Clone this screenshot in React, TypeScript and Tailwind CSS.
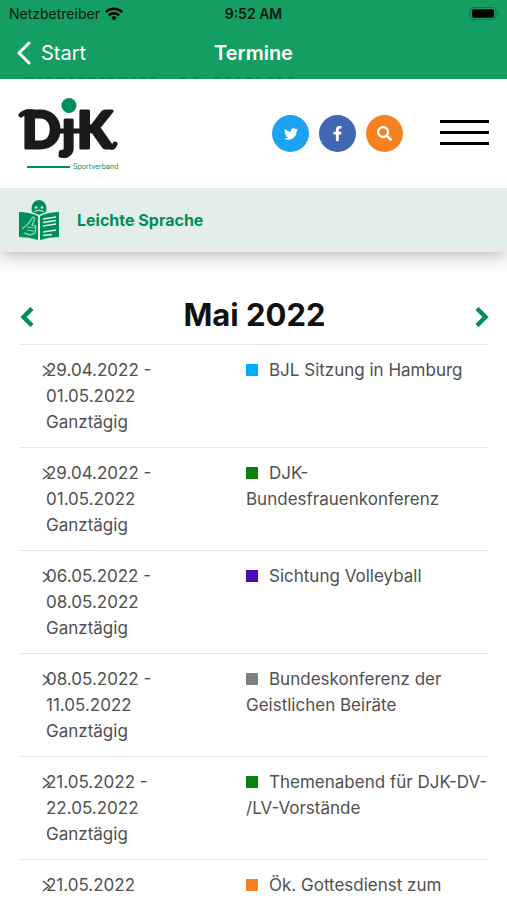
import { FaTwitter, FaFacebookF, FaSearch } from "react-icons/fa";

type Termin = {
  start: string;
  end?: string;
  title: string;
  color: string;
};

// \u200b erlaubt den Umbruch vor dem Schrägstrich
const termine: Termin[] = [
  { start: "29.04.2022 -", end: "01.05.2022", title: "BJL Sitzung in Hamburg", color: "bg-[#00aeff]" },
  { start: "29.04.2022 -", end: "01.05.2022", title: "DJK-Bundesfrauenkonferenz", color: "bg-[#0b800f]" },
  { start: "06.05.2022 -", end: "08.05.2022", title: "Sichtung Volleyball", color: "bg-[#4b0bb5]" },
  { start: "08.05.2022 -", end: "11.05.2022", title: "Bundeskonferenz der Geistlichen Beiräte", color: "bg-[#7b807b]" },
  { start: "21.05.2022 -", end: "22.05.2022", title: "Themenabend für DJK-DV-\u200b/LV-Vorstände", color: "bg-[#0b800f]" },
  { start: "21.05.2022", title: "Ök. Gottesdienst zum", color: "bg-[#f58220]" },
];

const StatusBar = () => (
  <div className="grid grid-cols-3 items-center h-7 px-2 text-sm text-[#06170f]">
    <div className="flex items-center gap-1 pl-px">
      <span>Netzbetreiber</span>
      <svg className="w-5 h-4" viewBox="0 0 20 16" fill="none" stroke="#000" strokeWidth="2.4">
        <path d="M1.8 6.2a11.6 11.6 0 0 1 16.4 0" />
        <path d="M4.8 9.4a7.4 7.4 0 0 1 10.4 0" />
        <path d="M10 14.4l-2.7-2.8a3.9 3.9 0 0 1 5.4 0z" fill="#000" stroke="none" />
      </svg>
    </div>
    <span className="text-center font-semibold">9:52 AM</span>
    <svg className="justify-self-end w-8 h-4" viewBox="0 0 32 16">
      <rect x="3" y="1.5" width="26" height="12" rx="4" fill="none" stroke="#0c7a4c" strokeWidth="1.2" />
      <rect x="5" y="3.2" width="22" height="8.6" rx="2" fill="#000" />
      <path d="M30.5 5.4c1.6.6 1.6 3.6 0 4.2z" fill="#0c7a4c" />
    </svg>
  </div>
);

const NavBar = () => (
  <div className="grid grid-cols-3 items-center h-[49px] px-4 text-xl text-white">
    <a href="#start" className="flex items-center gap-[9px]">
      <svg className="w-4 h-6" viewBox="0 0 16 24" fill="none" stroke="#fff" strokeWidth="3" strokeLinecap="round" strokeLinejoin="round">
        <path d="M13 2L3 12l10 10" />
      </svg>
      Start
    </a>
    <h1 className="text-center font-semibold">Termine</h1>
  </div>
);

// Inhalt, der unter der Leiste durchscheint
const BarEdge = () => (
  <svg className="block w-full h-0.5" preserveAspectRatio="none" viewBox="0 0 507 2" stroke="#0e8250" strokeWidth="1.4">
    <path d="M25 1h130" strokeDasharray="9 4 5 3 7 3" />
    <path d="M180 1h20" strokeDasharray="6 7" />
    <path d="M214 1h82" strokeDasharray="5 6 6 4" />
  </svg>
);

const Logo = () => (
  <svg className="w-[100px] h-20" viewBox="0 0 100 80" role="img" aria-label="DJK Sportverband">
    <g fontSize="51" fontWeight="900" fill="#1a1a18" stroke="#1a1a18" strokeWidth="3" strokeLinejoin="round" className="font-['Lato',sans-serif]">
      <text x="4" y="54">D</text>
      <text x="44" y="53">ȷ</text>
      <text x="59" y="54">K</text>
    </g>
    <path d="M3 21q4-4 12-3M40 37h22M92 52q3 3 5-2" stroke="#1a1a18" strokeWidth="5" strokeLinecap="round" fill="none" />
    <circle cx="51" cy="11.5" r="7.5" fill="#008f5a" />
    <path d="M9 73h43" stroke="#008f5a" strokeWidth="2.2" />
    <text x="55" y="75" fontSize="7" fill="#008f5a" className="font-['Inter',sans-serif]">Sportverband</text>
  </svg>
);

const BookIcon = () => (
  <svg className="w-10 h-10" viewBox="0 0 40 40">
    <path d="M13 12C11 4 16 0 20 0s9 4 7 12l-7 3z" fill="#008f5a" />
    <circle cx="17" cy="7.5" r="1.2" fill="#e3ede9" />
    <circle cx="23" cy="7.5" r="1.2" fill="#e3ede9" />
    <path d="M15.5 11.5q4.5-3 9 0" stroke="#e3ede9" strokeWidth="1" fill="none" />
    <path d="M0 12q10 0 19 4v24q-9-3-19-3z" fill="#008f5a" />
    <path d="M40 12q-10 0-19 4v24q9-3 19-3z" fill="#008f5a" />
    <path d="M3 29l6-5 5-7c2 0 2 2 1 4l-2 4 4 1-1 7-5 2-6-2" fill="none" stroke="#8bc9ae" strokeWidth="1.4" strokeLinejoin="round" />
    <path d="M8 30l7 1M8 27l8 1" stroke="#8bc9ae" strokeWidth="1" />
    <path d="M24 19l13-2M24 22.5l13-2M24 26l13-2M24 32l13-2M24 35.5l9-1" stroke="#e3ede9" strokeWidth="1.5" />
  </svg>
);

const Chevron = ({ right = false }: { right?: boolean }) => (
  <svg className="w-[14px] h-5 mt-1" viewBox="0 0 14 20" fill="none" stroke="#008f5a" strokeWidth="4.4">
    <path d={right ? "M2 1.5L10.5 10 2 18.5" : "M12 1.5L3.5 10l8.5 8.5"} />
  </svg>
);

export default function App() {
  return (
    <div className="flex flex-col h-screen overflow-hidden bg-white font-['Inter',sans-serif]">
      <div className="relative z-10 shrink-0 bg-[#149e62]">
        <StatusBar />
        <NavBar />
        <BarEdge />
      </div>

      <header className="shrink-0 shadow-[0_3px_18px_rgba(0,0,0,0.3)]">
        <div className="flex items-center justify-between h-[109px] px-[18px]">
          <a href="#home">
            <Logo />
          </a>
          <div className="flex items-center gap-[37px]">
            <div className="flex gap-[10px] text-white">
              <a href="#twitter" aria-label="Twitter" className="flex items-center justify-center size-[37px] rounded-full bg-[#1da1f2]">
                <FaTwitter size={14} />
              </a>
              <a href="#facebook" aria-label="Facebook" className="flex items-center justify-center size-[37px] rounded-full bg-[#4267b2]">
                <FaFacebookF size={15} />
              </a>
              <button aria-label="Suche" className="flex items-center justify-center size-[37px] rounded-full bg-[#f58220]">
                <FaSearch size={15} />
              </button>
            </div>
            <button aria-label="Menü" className="flex flex-col gap-2 pb-0.5">
              <span className="w-[49px] h-[3px] bg-black" />
              <span className="w-[49px] h-[3px] bg-black" />
              <span className="w-[49px] h-[3px] bg-black" />
            </button>
          </div>
        </div>
        <a href="#leichte-sprache" className="flex items-center gap-[18px] h-16 px-[19px] bg-[#e3ede9] font-bold text-[#008f5a]">
          <BookIcon />
          Leichte Sprache
        </a>
      </header>

      <main className="pl-5 pr-[18px] pt-[42px]">
        <div className="flex items-center justify-between h-[50px] pb-2">
          <button aria-label="Vorheriger Monat">
            <Chevron />
          </button>
          <h2 className="text-[31px] font-bold text-[#111]">Mai 2022</h2>
          <button aria-label="Nächster Monat">
            <Chevron right />
          </button>
        </div>

        <ul className="text-[17px] leading-[26px] text-[#505050]">
          {termine.map((t, i) => (
            <li key={i} className="grid grid-cols-[200px_1fr] pl-[26px] py-3 border-t border-[#e6e6e6]">
              <div className="relative">
                <svg className="absolute -left-1 top-2 w-2 h-3" viewBox="0 0 8 12" fill="none" stroke="#505050" strokeWidth="1.5">
                  <path d="M1 1l6 5-6 5" />
                </svg>
                <p>{t.start}</p>
                {t.end && <p>{t.end}</p>}
                {t.end && <p>Ganztägig</p>}
              </div>
              <p>
                <span className={`inline-block size-3 mr-[11px] ${t.color}`} />
                {t.title}
              </p>
            </li>
          ))}
        </ul>
      </main>
    </div>
  );
}
